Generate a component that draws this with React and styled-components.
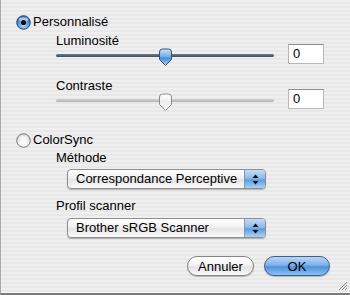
import React from 'react';
import styled, { createGlobalStyle } from 'styled-components';

const GlobalStyle = createGlobalStyle`
  html, body { margin: 0; padding: 0; }
  body { font-family: "Liberation Sans", Arial, sans-serif; }
`;

const Window = styled.div`
  box-sizing: border-box;
  width: 350px;
  height: 295px;
  border-left: 1px solid #a9a9a9;
  border-bottom: 2px solid #7b7b7b;
  box-shadow: inset 0 -1px 0 #fbfbfb;
  background: repeating-linear-gradient(to bottom, #efefef 0 2px, #e8e8e8 2px 4px);
  padding: 14px 20px 0 15px;
  display: flex;
  flex-direction: column;
  position: relative;
  font-size: 13px;
  color: #000;
`;

const RadioRow = styled.label`
  display: flex;
  align-items: center;
  gap: 2px;
  height: 16px;
  line-height: 16px;
  margin-top: ${p => p.$mt || 0}px;
`;

const Section = styled.div`
  display: flex;
  flex-direction: column;
  padding-left: ${p => p.$indent}px;
`;

const Label = styled.div`
  line-height: 15px;
  height: 15px;
  margin-top: ${p => p.$mt || 0}px;
`;

const SliderGroup = styled.div`
  display: flex;
  align-items: flex-end;
  gap: 14px;
  margin-top: ${p => p.$mt || 0}px;
`;

const SliderColumn = styled.div`
  display: flex;
  flex-direction: column;
  width: 218px;
`;

const SliderBox = styled.div`
  position: relative;
  height: 18px;
`;

const Track = styled.div`
  position: absolute;
  left: 0;
  right: 0;
  top: 6px;
  height: 3px;
  border-radius: 2px;
  background: ${p => (p.$active ? 'linear-gradient(#6d7c8e, #3f4c5c)' : 'linear-gradient(#d0d0d0, #b4b4b4)')};
`;

const Thumb = styled.svg`
  position: absolute;
  top: 0;
  width: 15px;
  height: 19px;
`;

const Field = styled.div`
  box-sizing: border-box;
  width: 36px;
  height: 20px;
  margin-bottom: 2px;
  background: #fff;
  border: 1px solid #b8b8b8;
  border-top-color: #8c8c8c;
  padding-left: 4px;
  line-height: 18px;
`;

const Popup = styled.div`
  box-sizing: border-box;
  display: flex;
  width: 199px;
  height: 20px;
  margin-top: ${p => p.$mt || 0}px;
  border: 1px solid #8e8e8e;
  border-radius: 4px;
  background: linear-gradient(#ffffff 0%, #f1f1f1 45%, #e4e4e4 55%, #fbfbfb 100%);
  box-shadow: 0 1px 1px rgba(0, 0, 0, 0.25);
  overflow: hidden;
`;

const PopupText = styled.div`
  flex: 1;
  padding-left: 8px;
  line-height: 18px;
  white-space: nowrap;
`;

const PopupArrows = styled.div`
  width: 20px;
  border-left: 1px solid #7f99b8;
  background: linear-gradient(#c4dcf5 0%, #8ebbeb 45%, #5e9ce0 55%, #a7d2f7 100%);
  display: flex;
  align-items: center;
  justify-content: center;
`;

const ButtonRow = styled.div`
  display: flex;
  justify-content: flex-end;
  gap: 10px;
  margin-top: 18px;
`;

const Button = styled.button`
  box-sizing: border-box;
  width: ${p => p.$w}px;
  height: 20px;
  padding: 0;
  border-radius: 10px;
  font: 13px "Liberation Sans", Arial, sans-serif;
  color: #000;
  border: 1px solid ${p => (p.$primary ? '#3b5f8f' : '#858585')};
  background: ${p =>
    p.$primary
      ? 'linear-gradient(#b9d6f5 0%, #7fb1ea 45%, #4f90dc 55%, #8cc3f4 100%)'
      : 'linear-gradient(#ffffff 0%, #f3f3f3 45%, #e2e2e2 55%, #fafafa 100%)'};
  box-shadow: 0 1px 1px rgba(0, 0, 0, 0.25);
`;

const GrowBox = styled.svg`
  position: absolute;
  right: 2px;
  bottom: 2px;
  width: 11px;
  height: 11px;
`;

function Radio({ checked }) {
  const id = checked ? 'rOn' : 'rOff';
  return (
    <svg width="15" height="15" viewBox="0 0 15 15">
      <defs>
        <radialGradient id={id} cx="50%" cy="70%" r="60%">
          {checked ? (
            <>
              <stop offset="0" stopColor="#b6dcff" />
              <stop offset="0.6" stopColor="#5c9be3" />
              <stop offset="1" stopColor="#2d68b8" />
            </>
          ) : (
            <>
              <stop offset="0" stopColor="#ffffff" />
              <stop offset="0.6" stopColor="#f0f0f0" />
              <stop offset="1" stopColor="#c9c9c9" />
            </>
          )}
        </radialGradient>
      </defs>
      <circle cx="7.5" cy="7.5" r="6.8" fill={`url(#${id})`} stroke={checked ? '#2f4f7a' : '#7d7d7d'} strokeWidth="1" />
      <ellipse cx="7.5" cy="4.5" rx="4.5" ry="2.3" fill="#fff" opacity="0.55" />
      {checked && <circle cx="7.5" cy="7.5" r="2.6" fill="#111" />}
    </svg>
  );
}

function Slider({ value, min, max, active }) {
  const pct = (value - min) / (max - min);
  const id = active ? 'tOn' : 'tOff';
  return (
    <SliderBox>
      <Track $active={active} />
      <Thumb viewBox="0 0 15 19" style={{ left: `calc(${pct * 100}% - 7px)` }}>
        <defs>
          <linearGradient id={id} x1="0" y1="0" x2="0" y2="1">
            {active ? (
              <>
                <stop offset="0" stopColor="#c9e2fa" />
                <stop offset="0.45" stopColor="#78aeea" />
                <stop offset="0.55" stopColor="#4a8ad8" />
                <stop offset="1" stopColor="#a8d4fa" />
              </>
            ) : (
              <>
                <stop offset="0" stopColor="#ffffff" />
                <stop offset="0.5" stopColor="#ededed" />
                <stop offset="1" stopColor="#fdfdfd" />
              </>
            )}
          </linearGradient>
        </defs>
        <path
          d="M1.5 4 Q1.5 1 4.5 1 H10.5 Q13.5 1 13.5 4 V11.5 L7.5 17.5 L1.5 11.5 Z"
          fill={`url(#${id})`}
          stroke={active ? '#34506f' : '#8a8a8a'}
          strokeWidth="1"
        />
      </Thumb>
    </SliderBox>
  );
}

function Arrows() {
  return (
    <svg width="7" height="11" viewBox="0 0 7 11">
      <path d="M3.5 0.5 L6.5 4 H0.5 Z" fill="#111" />
      <path d="M3.5 10.5 L6.5 7 H0.5 Z" fill="#111" />
    </svg>
  );
}

export default function App() {
  return (
    <>
      <GlobalStyle />
      <Window>
        <RadioRow>
          <Radio checked />
          Personnalisé
        </RadioRow>
        <Section $indent={40}>
          <SliderGroup $mt={3}>
            <SliderColumn>
              <Label>Luminosité</Label>
              <Slider value={0} min={-50} max={50} active />
            </SliderColumn>
            <Field>0</Field>
          </SliderGroup>
          <SliderGroup $mt={12}>
            <SliderColumn>
              <Label>Contraste</Label>
              <Slider value={0} min={-50} max={50} />
            </SliderColumn>
            <Field>0</Field>
          </SliderGroup>
        </Section>
        <RadioRow $mt={21}>
          <Radio />
          ColorSync
        </RadioRow>
        <Section $indent={40}>
          <Label $mt={2}>Méthode</Label>
          <Section $indent={11}>
            <Popup $mt={4}>
              <PopupText>Correspondance Perceptive</PopupText>
              <PopupArrows>
                <Arrows />
              </PopupArrows>
            </Popup>
          </Section>
          <Label $mt={9}>Profil scanner</Label>
          <Section $indent={11}>
            <Popup $mt={5}>
              <PopupText>Brother sRGB Scanner</PopupText>
              <PopupArrows>
                <Arrows />
              </PopupArrows>
            </Popup>
          </Section>
        </Section>
        <ButtonRow>
          <Button $w={67}>Annuler</Button>
          <Button $w={66} $primary>OK</Button>
        </ButtonRow>
        <GrowBox viewBox="0 0 11 11">
          <path d="M10 2 L2 10 M10 5 L5 10 M10 8 L8 10" stroke="#8a8a8a" strokeWidth="1" />
        </GrowBox>
      </Window>
    </>
  );
}
